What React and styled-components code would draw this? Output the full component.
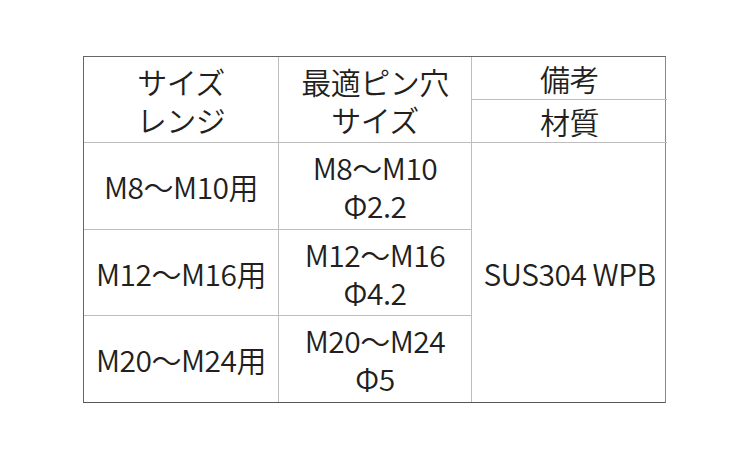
import React from 'react';
import styled, { createGlobalStyle } from 'styled-components';

const GlobalStyle = createGlobalStyle`
  html, body {
    margin: 0;
    padding: 0;
    background: #ffffff;
  }
  body {
    width: 750px;
    height: 450px;
    overflow: hidden;
    font-family: "Noto Sans CJK JP", "Noto Sans", sans-serif;
    color: #231f20;
  }
`;

const Page = styled.div`
  padding: 56px 0 0 83px;
`;

const Table = styled.div`
  display: grid;
  grid-template-columns: 195px 193px 195px;
  grid-template-rows: 43px 43px 87px 86px 86px;
  width: 583px;
  border-top: 1.5px solid #666;
  border-left: 1.5px solid #666;
  border-bottom: 1.5px solid #555;
  border-right: 1.5px solid #888;
  box-sizing: border-box;
`;

const Cell = styled.div`
  display: flex;
  flex-direction: column;
  align-items: center;
  justify-content: center;
  font-size: 30px;
  line-height: 38px;
  font-weight: 350;
  letter-spacing: -0.5px;
  white-space: nowrap;
  border-right: ${(p) => (p.$lastCol ? 'none' : '1px solid #bdbdbd')};
  border-bottom: ${(p) => (p.$lastRow ? 'none' : '1px solid #bdbdbd')};
  grid-row: ${(p) => p.$rows || 'auto'};
  grid-column: ${(p) => p.$col || 'auto'};
`;

const rows = [
  { size: 'M8～M10用', pin: ['M8～M10', 'Φ2.2'] },
  { size: 'M12～M16用', pin: ['M12～M16', 'Φ4.2'] },
  { size: 'M20～M24用', pin: ['M20～M24', 'Φ5'] },
];

export default function App() {
  return (
    <>
      <GlobalStyle />
      <Page>
        <Table>
          <Cell $col="1" $rows="1 / span 2">
            <span>サイズ</span>
            <span>レンジ</span>
          </Cell>
          <Cell $col="2" $rows="1 / span 2">
            <span>最適ピン穴</span>
            <span>サイズ</span>
          </Cell>
          <Cell $col="3" $rows="1" $lastCol>備考</Cell>
          <Cell $col="3" $rows="2" $lastCol>材質</Cell>
          {rows.map((r, i) => (
            <React.Fragment key={r.size}>
              <Cell $col="1" $rows={`${i + 3}`} $lastRow={i === rows.length - 1}>
                {r.size}
              </Cell>
              <Cell $col="2" $rows={`${i + 3}`} $lastRow={i === rows.length - 1}>
                {r.pin.map((t) => (
                  <span key={t}>{t}</span>
                ))}
              </Cell>
            </React.Fragment>
          ))}
          <Cell $col="3" $rows="3 / span 3" $lastCol $lastRow>
            SUS304 WPB
          </Cell>
        </Table>
      </Page>
    </>
  );
}
